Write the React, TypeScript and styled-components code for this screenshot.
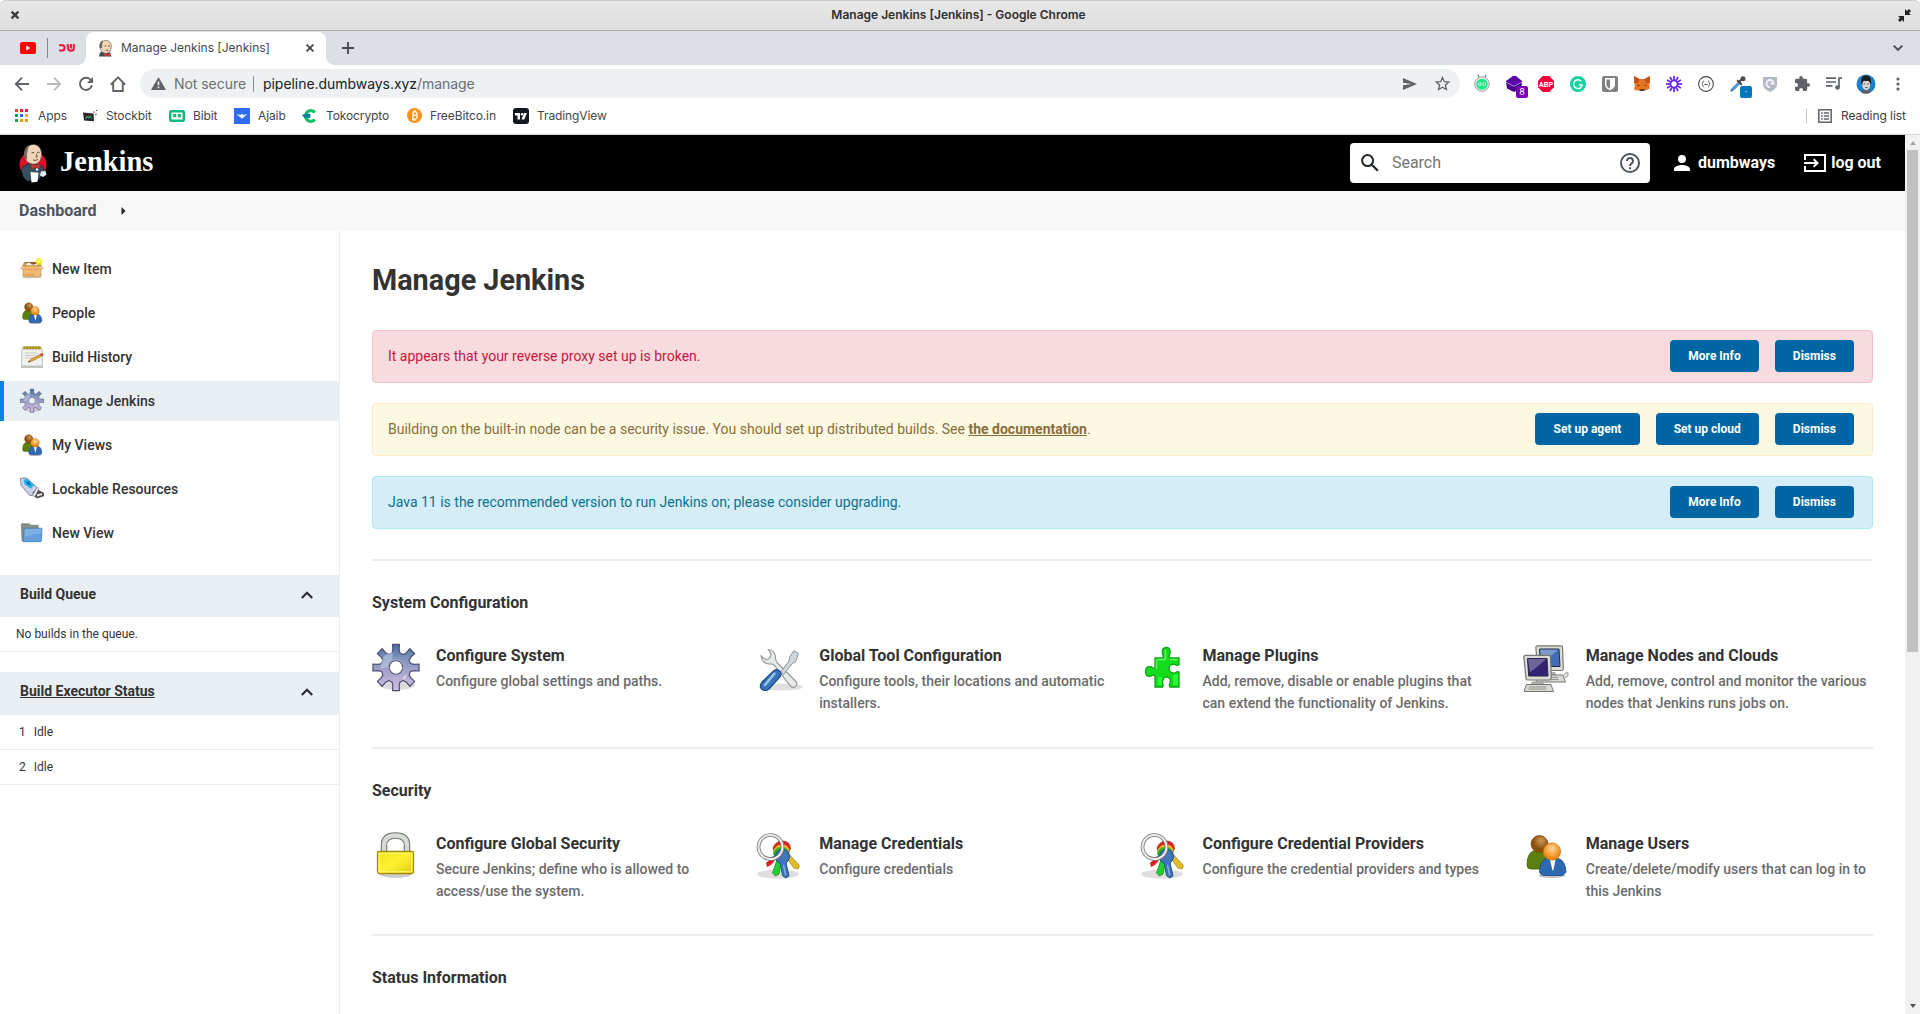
import React from 'react';
import styled, { createGlobalStyle } from 'styled-components';

const GlobalStyle = createGlobalStyle`
  *, *::before, *::after { box-sizing: border-box; }
  body { margin: 0; background: #fff; overflow: hidden; }
  svg { display: block; flex: none; overflow: visible; }
`;

const uiFont = 'Inter, "Open Sans", sans-serif';
const pageFont = 'Roboto, "Noto Sans", sans-serif';

/* ---------- window and browser chrome ---------- */

const Window = styled.div`
  display: flex;
  flex-direction: column;
  width: 1920px;
  height: 1014px;
  overflow: hidden;
  background: #fff;
  font-family: ${pageFont};
`;

const TitleBar = styled.header`
  display: flex;
  align-items: center;
  justify-content: space-between;
  flex: none;
  height: 31px;
  padding: 0 9px 0 11px;
  border-bottom: 1px solid #ababab;
  border-radius: 6px 6px 0 0;
  background: linear-gradient(#e8e8e8, #dedede);
  box-shadow: inset 0 1px #c9c9c9;
`;

const WindowTitle = styled.span`
  font: 600 12px/16px ${uiFont};
  color: #303030;
`;

const TabStrip = styled.div`
  display: flex;
  align-items: center;
  flex: none;
  height: 34px;
  padding: 0 17px 0 20px;
  background: #dcdfe4;
`;

const PinDivider = styled.i`
  width: 1px;
  height: 20px;
  margin: 0 11px;
  background: #85888c;
`;

const Tab = styled.div`
  display: flex;
  align-items: center;
  position: relative;
  width: 240px;
  height: 33px;
  margin: 1px 0 0 11px;
  padding: 0 12px 1px 12px;
  border-radius: 8px 8px 0 0;
  background: #fff;

  &::before, &::after {
    content: '';
    position: absolute;
    bottom: 0;
    width: 8px;
    height: 8px;
  }
  &::before {
    left: -8px;
    background: radial-gradient(circle at 0 0, transparent 7.5px, #fff 8px);
  }
  &::after {
    right: -8px;
    background: radial-gradient(circle at 100% 0, transparent 7.5px, #fff 8px);
  }
`;

const TabTitle = styled.span`
  flex: 1;
  margin-left: 8px;
  font: 400 12px/16px ${uiFont};
  color: #45494d;
`;

const NewTab = styled.div`
  flex: 1;
  margin-left: 16px;
`;

const Toolbar = styled.div`
  display: flex;
  align-items: center;
  flex: none;
  height: 37px;
  padding: 0 6px;
`;

const ToolCell = styled.span`
  display: flex;
  align-items: center;
  justify-content: center;
  position: relative;
  width: 32px;
  height: 28px;
`;

const Badge = styled.b<{ $color: string }>`
  position: absolute;
  left: 18px;
  top: 16px;
  width: 12px;
  height: 12px;
  border-radius: 2px;
  background: ${(p) => p.$color};
  color: #fff;
  font: 400 9px/12px ${uiFont};
  text-align: center;
`;

const Omnibox = styled.div`
  display: flex;
  align-items: center;
  flex: 1;
  height: 29px;
  margin: 0 6px;
  padding: 0 10px 0 11px;
  border-radius: 15px;
  background: #eef1f2;
  font: 400 14px/20px ${uiFont};
  letter-spacing: -0.05px;
  color: #6b6f73;
`;

const Security = styled.span`
  margin-left: 8px;
  padding-right: 7px;
`;

const UrlDivider = styled.i`
  width: 1px;
  height: 16px;
  background: #8d9195;
`;

const Url = styled.span`
  flex: 1;
  margin-left: 9px;
  b { font-weight: 400; color: #202124; }
`;

const OmniActions = styled.span`
  display: flex;
  align-items: center;
  gap: 18px;
`;

const BookmarkBar = styled.div`
  display: flex;
  align-items: center;
  flex: none;
  height: 33px;
  padding: 0 14px 5px 15px;
  border-bottom: 1px solid #d3d5d8;
`;

const Bookmark = styled.span<{ $width: number; $gap?: number }>`
  display: flex;
  align-items: center;
  gap: ${(p) => p.$gap ?? 8}px;
  width: ${(p) => p.$width}px;
  font: 400 12px/20px ${uiFont};
  letter-spacing: -0.1px;
  white-space: nowrap;
  color: #42464a;
`;

const ReadingList = styled.span`
  display: flex;
  align-items: center;
  gap: 9px;
  margin-left: auto;
  padding-left: 11px;
  border-left: 1px solid #c4c7ca;
  font: 400 12px/16px ${uiFont};
  letter-spacing: -0.05px;
  color: #3c4043;
`;

/* ---------- page ---------- */

const Viewport = styled.div`
  display: flex;
  flex: 1;
  min-height: 0;
`;

const Page = styled.div`
  flex: 1;
  display: flex;
  flex-direction: column;
  min-width: 0;
`;

const Scrollbar = styled.div`
  display: flex;
  flex-direction: column;
  align-items: center;
  width: 15px;
  background: #f1f1f1;
`;

const ScrollArrow = styled.i<{ $down?: boolean }>`
  width: 0;
  height: 0;
  margin: ${(p) => (p.$down ? 'auto 0 6px' : '6px 0 5px')};
  border: 3.5px solid transparent;
  border-top: ${(p) => (p.$down ? '4px solid #505050' : '0')};
  border-bottom: ${(p) => (p.$down ? '0' : '4px solid #a3a3a3')};
`;

const ScrollThumb = styled.div`
  width: 11px;
  height: 502px;
  background: #c1c1c1;
`;

const PageHeader = styled.header`
  display: flex;
  align-items: center;
  flex: none;
  height: 56px;
  padding: 0 24px 0 19px;
  background: #000;
  color: #fff;
`;

const Wordmark = styled.span`
  flex: 1;
  margin: 0 0 2px 12px;
  font: 700 28.5px/34px "Liberation Serif", serif;
`;

const SearchBox = styled.div`
  display: flex;
  align-items: center;
  width: 300px;
  height: 40px;
  padding: 0 10px 0 11px;
  border-radius: 4px;
  background: #fff;
  font-size: 16px;
  color: #757575;
`;

const SearchText = styled.span`
  flex: 1;
  margin: 0 0 1px 13px;
`;

const UserLink = styled.a<{ $left: number; $gap: number }>`
  display: flex;
  align-items: center;
  gap: ${(p) => p.$gap}px;
  margin-left: ${(p) => p.$left}px;
  font-size: 16px;
  font-weight: 700;
  line-height: 20px;
  color: #fff;
`;

const Breadcrumbs = styled.nav`
  display: flex;
  align-items: center;
  gap: 25px;
  flex: none;
  height: 40px;
  padding: 0 0 1px 19px;
  background: #f8f8f8;
  font-size: 16px;
  font-weight: 700;
  color: #4d545d;
`;

const Columns = styled.div`
  display: flex;
  flex: 1;
  min-height: 0;
`;

const Sidebar = styled.aside`
  flex: none;
  width: 340px;
  padding-top: 18px;
  border-right: 1px solid #e9eef2;
  color: #333;
`;

const TaskList = styled.nav`
  display: flex;
  flex-direction: column;
  gap: 4px;
  margin-bottom: 22px;
`;

const Task = styled.a<{ $active?: boolean }>`
  display: flex;
  align-items: center;
  gap: 8px;
  height: 40px;
  padding-left: 16px;
  border-left: 4px solid ${(p) => (p.$active ? '#0b83d9' : 'transparent')};
  background: ${(p) => (p.$active ? '#e9eef2' : 'transparent')};
  background-clip: padding-box;
  font-size: 14px;
  font-weight: 500;
`;

const PaneHeader = styled.div<{ $link?: boolean; $height: number }>`
  display: flex;
  justify-content: space-between;
  height: ${(p) => p.$height}px;
  padding: 10px 26px 0 20px;
  background: #e9eef2;
  font: 700 14px/18px ${pageFont};
  text-decoration: ${(p) => (p.$link ? 'underline' : 'none')};
  svg { margin-top: 6px; }
`;

const PaneRow = styled.div<{ $left: number }>`
  display: flex;
  gap: 8px;
  height: 35px;
  padding-left: ${(p) => p.$left}px;
  border-bottom: 1px solid #e9eef2;
  font-size: 12px;
  line-height: 34px;
`;

const Pane = styled.section`
  margin-bottom: 20px;
`;

const Main = styled.main`
  flex: 1;
  padding: 0 32px;
  overflow: hidden;
  color: #333;
`;

const Heading = styled.h1`
  margin: 30px 0 31px;
  font: 700 28.8px/38px ${pageFont};
`;

const tones = {
  danger: ['#f8dbdf', '#f5c1ca', '#c4183c'],
  warning: ['#fcf9e2', '#fbebc8', '#8a6d3b'],
  info: ['#d4edf6', '#abecee', '#0b7291'],
};

const AlertList = styled.div`
  display: flex;
  flex-direction: column;
  gap: 20px;
  margin-bottom: 30px;
`;

const Alert = styled.div<{ $tone: keyof typeof tones }>`
  display: flex;
  align-items: center;
  gap: 16px;
  height: 53px;
  padding: 0 18px 1px 15px;
  border: 1px solid ${(p) => tones[p.$tone][1]};
  border-radius: 4px;
  background: ${(p) => tones[p.$tone][0]};
  color: ${(p) => tones[p.$tone][2]};
  font-size: 14px;
`;

const AlertText = styled.span`
  flex: 1;
  a { font-weight: 700; text-decoration: underline; }
`;

const Button = styled.button`
  height: 32px;
  padding: 0 18.1px;
  border: 0;
  border-radius: 4px;
  background: #0066a3;
  color: #fff;
  font: 700 12px/16px ${pageFont};
`;

const Section = styled.section<{ $height: number }>`
  height: ${(p) => p.$height}px;
  border-top: 2px solid #e9eef2;
`;

const SectionTitle = styled.h2`
  margin: 32px 0 31px;
  font: 700 16px/20px ${pageFont};
`;

const Grid = styled.div`
  display: grid;
  grid-template-columns: repeat(4, 1fr);
  gap: 32px;
`;

const Item = styled.div`
  display: flex;
  gap: 16px;
`;

const ItemTitle = styled.dt`
  font: 700 16px/22px ${pageFont};
`;

const ItemBody = styled.dl`
  flex: 1;
  margin: 1px 0 0;
`;

const ItemText = styled.dd`
  margin: 3px 0 0;
  font: 500 14px/22px ${pageFont};
  color: #6b6b6b;
`;

/* ---------- browser icons ---------- */

const stroke = (color = '#5f6368', width = 2) => ({
  fill: 'none',
  stroke: color,
  strokeWidth: width,
});

const CloseIcon = ({ size = 8, width = 1.7 }: { size?: number; width?: number }) => (
  <svg width={size} height={size} viewBox="0 0 8 8"><path d="M.6.6l6.8 6.8M7.4.6L.6 7.4" {...stroke('#3c4043', width)} /></svg>
);
const RestoreIcon = () => (
  <svg width="13" height="13" viewBox="0 0 13 13" fill="#222"><path d="M7 6V0l2 2 2-2 2 2-2 2 2 2zM6 7v6l-2-2-2 2-2-2 2-2-2-2z" /></svg>
);
const YoutubeIcon = () => (
  <svg width="16" height="12" viewBox="0 0 16 12"><rect width="16" height="12" rx="2.6" fill="#f00" /><path d="M6.2 3.6L10.4 6l-4.2 2.4z" fill="#fff" /></svg>
);
const DumbwaysIcon = () => (
  <svg width="16" height="10" viewBox="0 0 16 10">
    <path d="M0 2.2h3.600q1.900 0 1.900 2.600T3.600 7.600H0" {...stroke('#f5113f', 2)} />
    <path d="M8.600 1l.4 4.400q.3 2.300 3.200 2.300t2.600-2.700V1M11.900 1v4.500" {...stroke('#f5113f', 2)} />
  </svg>
);
const ButlerHead = () => (
  <svg width="15" height="17" viewBox="0 0 15 17">
    <path d="M1 16.500l1-4 4-1 6 1 1.500 4z" fill="#335061" />
    <path d="M3 11C1 7 2 2 6 .8s7 1 7.300 5c.2 3-.8 6-3.300 7.200-2 .8-5 .4-7-2z" fill="#f0d6b7" stroke="#5d504a" strokeWidth=".6" />
    <path d="M1.800 8C.8 4.500 2.200 1.200 5 .6L4.300 3.500 3.800 8z" fill="#6b6358" />
    <path d="M6.500 6h2M10 6h2M7.500 10l3 .3" stroke="#50443c" strokeWidth=".8" />
    <path d="M6 13l3.300 1.300L12.500 13v3.500L9.300 15.200 6.300 16.500z" fill="#d33833" />
  </svg>
);
const PlusIcon = () => (
  <svg width="12" height="12" viewBox="0 0 12 12"><path d="M6 0v12M0 6h12" {...stroke('#45494d', 1.8)} /></svg>
);
const ChevronDown = () => (
  <svg width="10" height="6" viewBox="0 0 10 6"><path d="M.7.7L5 5 9.300.7" {...stroke('#45494d', 1.8)} /></svg>
);
const ArrowIcon = ({ right }: { right?: boolean }) => (
  <svg width="14" height="14" viewBox="0 0 14 14">
    <path d={right ? 'M0 7h13M7 .7L13.200 7 7 13.300' : 'M14 7H1M7 .7L.8 7 7 13.300'} {...stroke(right ? '#b9bcbf' : '#5f6368', 1.8)} />
  </svg>
);
const ReloadIcon = () => (
  <svg width="14" height="14" viewBox="0 0 14 14"><path d="M12 3.200A6.100 6.100 0 1 0 13 8.300" {...stroke('#5f6368', 1.9)} /><path d="M14 0v6H8z" fill="#5f6368" /></svg>
);
const HomeIcon = () => (
  <svg width="16" height="16" viewBox="0 0 16 16"><path d="M.8 8.600L8 1.300l7.200 7.300M3.200 7v8h9.600V7" {...stroke('#5f6368', 1.9)} /></svg>
);
const WarningIcon = () => (
  <svg width="15" height="13" viewBox="0 0 15 13"><path d="M7.500 0L15 13H0z" fill="#5f6368" /><path d="M7.500 4.500v3.700M7.500 9.500v1.700" stroke="#eef1f2" strokeWidth="1.600" /></svg>
);
const SendIcon = () => (
  <svg width="14" height="12" viewBox="0 0 14 12"><path d="M0 0l14 6L0 12V7.300L8.500 6 0 4.700z" fill="#5f6368" /></svg>
);
const StarIcon = () => (
  <svg width="15" height="15" viewBox="0 0 15 15"><path d="M7.500 1.500l1.800 4.200 4.500.4-3.400 3 1 4.400-3.900-2.300-3.900 2.300 1-4.400-3.400-3 4.500-.4z" {...stroke('#5f6368', 1.3)} /></svg>
);
const AndroidIcon = () => (
  <svg width="16" height="17" viewBox="0 0 16 17">
    <path d="M4 0l1.500 3.500M12 0l-1.500 3.500" {...stroke('#6c7480', 1.2)} />
    <circle cx="8" cy="9" r="7.300" fill="#e9ecef" stroke="#9aa0a8" />
    <path d="M2.300 9c.2-3 2.500-5 5.700-5s5.500 2 5.700 5c.1 3.400-2.500 5.600-5.700 5.600S2.200 12.400 2.300 9z" fill="#1de783" />
    <path d="M4.200 9.200a1.500 1.500 0 1 1 3 0 1.500 1.500 0 1 1-3 0M8.800 9.200a1.500 1.500 0 1 1 3 0 1.500 1.500 0 1 1-3 0" {...stroke('#d6fbe8', 1)} />
  </svg>
);
const CubesIcon = () => (
  <svg width="18" height="16" viewBox="0 0 18 16"><path d="M8 0h3l6 5v1L9 10 1 6V5z" fill="#5c00a8" /><path d="M1 6.500L9 10.500v5.500L2 12.500z" fill="#4c0094" /><path d="M17 6.500L9 10.500V16l7-4z" fill="#3d0080" /></svg>
);
const AbpIcon = () => (
  <svg width="16" height="16" viewBox="0 0 16 16">
    <path d="M4.700 0h6.600L16 4.700v6.600L11.300 16H4.700L0 11.300V4.700z" fill="#f5003c" />
    <text x="8" y="10.700" textAnchor="middle" fill="#fff" fontFamily="Roboto" fontWeight="700" fontSize="7.400">ABP</text>
  </svg>
);
const GrammarlyIcon = () => (
  <svg width="16" height="16" viewBox="0 0 16 16"><circle cx="8" cy="8" r="8" fill="#12d39d" /><path d="M11.300 5.200A4.400 4.400 0 1 0 12.300 9H9" {...stroke('#fff', 1.4)} /></svg>
);
const BitwardenIcon = () => (
  <svg width="16" height="16" viewBox="0 0 16 16"><rect width="16" height="16" rx="2" fill="#808080" /><path d="M3 2h10v6.500c0 3-2.500 4.500-5 5.700-2.500-1.200-5-2.700-5-5.700z" fill="#fff" /><path d="M4.500 3.500H8v9.200c-2-1-3.500-2.300-3.500-4.200z" fill="#808080" /></svg>
);
const MetamaskIcon = () => (
  <svg width="16" height="15" viewBox="0 0 16 15">
    <path d="M0 0l5.500 3h5L16 0v6l-.8 3 .6 3.500-4 1.700L10 15H6l-1.800-.8-4 .1L.8 9 0 6z" fill="#e8751f" />
    <path d="M0 0l5.500 3L4 7 .5 7zM16 0l-5.500 3L12 7l3.500 0z" fill="#c4501f" />
    <path d="M6 13h4l.5 1.500L9.500 15h-3l-1-.5z" fill="#5a3a28" /><path d="M3.800 8.500l2.200 1.200-2 .4zM12.200 8.500L10 9.700l2 .4z" fill="#233447" />
  </svg>
);
const BurstIcon = () => (
  <svg width="16" height="16" viewBox="-8 -8 16 16">
    {Array.from({ length: 12 }, (_, i) => <path key={i} d="M0-3V-8" transform={`rotate(${i * 30})`} {...stroke('#6d28e8', 1.8)} />)}
    <circle r="3.500" {...stroke('#6d28e8', 1.6)} />
  </svg>
);
const BracesIcon = () => (
  <svg width="16" height="16" viewBox="0 0 16 16">
    <circle cx="8" cy="8" r="7.400" {...stroke('#4a4a4a', 1.1)} />
    <path d="M5.800 5q-1 0-1 1.200T3.800 8q1 .3 1 1.500t1 1.400M10.200 5q1 0 1 1.200t1 1.800q-1 .3-1 1.500t-1 1.400M6.400 8.500h3.300" {...stroke('#5a5a5a', 1)} />
  </svg>
);
const DropperIcon = () => (
  <svg width="16" height="16" viewBox="0 0 16 16">
    <path d="M9 5.500L1.500 13l-.7 2.300 2.300-.7L10.500 7z" fill="#4aa0e8" stroke="#37618c" strokeWidth=".8" />
    <path d="M7.200 4.200l4.600 4.600M9.500 5.500L13 2" stroke="#444" strokeWidth="2" /><circle cx="13" cy="2.800" r="2.500" fill="#4b4b4b" />
  </svg>
);
const ShieldIcon = () => (
  <svg width="14" height="16" viewBox="0 0 14 16"><path d="M0 1h14v7c0 4-3.500 6.200-7 8-3.500-1.800-7-4-7-8z" fill="#b3b7c6" /><path d="M7 11.200A3.600 3.600 0 1 1 10.600 7.500H7.500" {...stroke('#f4f5f8', 1.9)} /></svg>
);
const PuzzleIcon = () => (
  <svg width="15" height="15" viewBox="2 1 21 21"><path fill="#5f6368" d="M20.500 11H19V7c0-1.100-.9-2-2-2h-4V3.500a2.500 2.500 0 0 0-5 0V5H4c-1.100 0-2 .9-2 2v3.800h1.500a2.700 2.700 0 0 1 0 5.400H2V20c0 1.100.9 2 2 2h3.800v-1.500a2.700 2.700 0 0 1 5.400 0V22H17c1.100 0 2-.9 2-2v-4h1.500a2.500 2.500 0 0 0 0-5z" /></svg>
);
const QueueIcon = () => (
  <svg width="16" height="13" viewBox="0 0 16 13"><path d="M0 1.200h10M0 5h10M0 8.800h6.500M13 10V1.200h3" {...stroke('#5f6368', 1.7)} /><circle cx="11.500" cy="10.500" r="2.300" fill="#5f6368" /></svg>
);
const Avatar = () => (
  <svg width="20" height="20" viewBox="0 0 20 20">
    <circle cx="10" cy="10" r="9.500" fill="#1583cb" />
    <path d="M5 18.200c1-2 2.500-2.700 5-2.700s4 .7 5 2.700a9.500 9.500 0 0 1-10 0z" fill="#5a6065" />
    <path d="M5.500 10C4.500 4 6.500 1.500 10 1.500s6 2.500 4.700 8.500L10 14z" fill="#1c1c1e" />
    <ellipse cx="10.200" cy="10.800" rx="4" ry="5.400" fill="#d8d8d5" />
    <path d="M5.800 9C5.500 5 7 3 10 3s5 2 4.300 6l-2-2.200-2.800.5-1.700-.7z" fill="#1c1c1e" />
    <path d="M7.500 10h1.700M11.300 10H13M9.200 13.600h2.400" stroke="#4c4c4c" strokeWidth=".9" />
  </svg>
);
const KebabIcon = () => (
  <svg width="4" height="14" viewBox="0 0 4 14" fill="#5f6368"><circle cx="2" cy="2" r="1.600" /><circle cx="2" cy="7" r="1.600" /><circle cx="2" cy="12" r="1.600" /></svg>
);
const AppsIcon = () => (
  <svg width="13" height="13" viewBox="0 0 13 13">
    {['#e94235', '#e91e3c', '#e91e3c', '#0f9d58', '#1a73e8', '#f9ab00', '#0f9d58', '#f29900', '#f29900'].map((c, i) => (
      <rect key={i} x={(i % 3) * 5} y={Math.floor(i / 3) * 5} width="3" height="3" fill={c} />
    ))}
  </svg>
);
const StockbitIcon = () => (
  <svg width="15" height="12" viewBox="0 0 15 12"><path d="M0 2.500l10.500 1 .5 7.700-10-.6z" fill="#26272b" /><path d="M2.500 8.500l2-1.800L6 7.800l2-2" {...stroke('#32c060', 1.1)} /><path d="M3 6l1 .5M5.500 5.500h1" stroke="#e23" strokeWidth="1" /><path d="M8 8h1.500" stroke="#47f" /><path d="M10.500 2.500l.8-.8M12.300 4.500l1.300-.3M13.200.8l.8-.6" stroke="#333" strokeWidth="1.200" /></svg>
);
const BibitIcon = () => (
  <svg width="16" height="12" viewBox="0 0 16 12"><rect x="1.200" y="1.200" width="13.600" height="9.600" rx="1" {...stroke('#0eb97a', 2.4)} /><path d="M4.200 4h3v3.300h-3zM8.800 4h3v3.300h-3z" fill="#0eb97a" /></svg>
);
const AjaibIcon = () => (
  <svg width="16" height="16" viewBox="0 0 16 16"><rect width="16" height="16" fill="#2f6bf3" /><path d="M2.500 6l4 .9L8 5.500l1.500 1.400 4-.9-3.400 3L8 10.700 5.900 9z" fill="#e8efff" /></svg>
);
const TokoIcon = () => (
  <svg width="15" height="14" viewBox="0 0 15 14"><path d="M12.800 3.500A5.300 5.300 0 1 0 12.800 10.500" {...stroke('#14be62', 3.2)} /><path d="M0 7l4.500-2.500 4 .5V7l-.5 2H5.500z" fill="#127fa3" /><path d="M0 5.500h3.500L3 9.500z" fill="#127fa3" /></svg>
);
const BitcoinIcon = () => (
  <svg width="15" height="15" viewBox="0 0 15 15">
    <circle cx="7.500" cy="7.500" r="7.500" fill="#f7931a" />
    <path d="M5.800 3.800h2.500q1.800.1 1.800 1.700T8.300 7.300H6M8.300 7.300q2 .2 1.800 2t-2 1.900H5M6.300 3.800L5.600 11.200M7 2.300v1.500M8.600 2.300v1.500M6.300 11.200v1.500M8 11.200v1.500" {...stroke('#fff', 1.2)} />
  </svg>
);
const TradingViewIcon = () => (
  <svg width="16" height="16" viewBox="0 0 16 16"><rect width="16" height="16" rx="3" fill="#131722" /><path d="M2 5h5v6.500H4.500V7.500H2zM11 5h3l-2.700 6.500H8.500z" fill="#fff" /><circle cx="9" cy="6.200" r="1.200" fill="#fff" /></svg>
);
const ListIcon = () => (
  <svg width="14" height="14" viewBox="0 0 14 14"><rect x=".8" y=".8" width="12.400" height="12.400" {...stroke('#5f6368', 1.5)} /><path d="M3 4h1.600M3 7h1.600M3 10h1.600M5.800 4H11M5.800 7H11M5.800 10H11" {...stroke('#5f6368', 1.5)} /></svg>
);

/* ---------- page icons ---------- */

const JenkinsLogo = () => (
  <svg width="29" height="39" viewBox="0 0 29 39">
    <ellipse cx="14" cy="20.500" rx="13.500" ry="13" fill="#e0102c" />
    <path d="M4 22.500l6-3 8 1 6 2 1.500 6-2.500 2-2 4-4 2.500H8l-4-4.500-1.500-6z" fill="#335061" stroke="#14232c" strokeWidth=".7" />
    <path d="M7.500 17C4 11 5.500 3 11.500 1S22 3 22.500 9.500c.3 5-2 9.500-6 10.500-3.500.6-6.500-.5-9-3z" fill="#f0d6b7" stroke="#5d504a" strokeWidth=".6" />
    <path d="M6.700 15C3.500 9 5.500 2.500 10.500 1.200 8.500 4 9.300 6 8.300 8.500 7.500 10.500 8.600 13 8 15.500z" fill="#756b60" />
    <path d="M12.500 9q1.500-1 2.800 0M18 8.600q1.500-.8 2.600 0M17.500 10l.6 3-1.500.2M14 16q2.500 1 5-.5" fill="none" stroke="#4b3d35" strokeWidth=".9" />
    <path d="M12 20l4.500 1.500 4-2 .6 5-4.400-1.200-4.400 2z" fill="#d33833" stroke="#8f1820" strokeWidth=".5" />
    <path d="M11.500 28l8 .8-1 9-6 .7z" fill="#fff" />
    <path d="M22 27.500l4.500-.8 1 4-3.500 2.300-3-1.500z" fill="#e6edf1" />
    <circle cx="18" cy="25.500" r="1.200" fill="#fff" />
  </svg>
);
const SearchIcon = () => (
  <svg width="18" height="18" viewBox="0 0 18 18"><circle cx="6.600" cy="6.600" r="5.500" {...stroke('#22272b')} /><path d="M10.800 10.800l6 6" {...stroke('#22272b', 2.3)} /></svg>
);
const HelpIcon = () => (
  <svg width="20" height="20" viewBox="0 0 20 20"><circle cx="10" cy="10" r="9" {...stroke('#4d545d')} /><path d="M7 8a3 3 0 1 1 4.700 2.400Q10 11.500 10 13" {...stroke('#4d545d')} /><path d="M9 14.300h2v2H9z" fill="#4d545d" /></svg>
);
const PersonIcon = () => (
  <svg width="16" height="16" viewBox="4 4 16 16" fill="#fff"><path d="M12 12a4 4 0 1 0 0-8 4 4 0 0 0 0 8zm0 2c-2.670 0-8 1.340-8 4v2h16v-2c0-2.660-5.330-4-8-4z" /></svg>
);
const LogoutIcon = () => (
  <svg width="22" height="18" viewBox="0 0 22 18"><path d="M1 6V1h20v16H1v-5M0 9h13M9.700 5.200L13.500 9l-3.800 3.800" {...stroke('#fff')} /></svg>
);
const CrumbArrow = () => (
  <svg width="5" height="8" viewBox="0 0 5 8"><path d="M.5 0l4 4-4 4z" fill="#222" /></svg>
);
const ChevronUp = () => (
  <svg width="12" height="8" viewBox="0 0 12 8"><path d="M.8 7L6 1.800 11.200 7" {...stroke('#2b2f33', 2.2)} /></svg>
);

type IconProps = { size?: number };

const gearPath = (() => {
  const pts: string[] = [];
  for (let i = 0; i < 8; i++) {
    const a = (i * Math.PI) / 4;
    ([[-0.27, 15], [-0.17, 18.500], [-0.15, 23.300], [0.15, 23.300], [0.17, 18.500], [0.27, 15]] as const).forEach(([d, r]) => {
      pts.push(`${(24 + r * Math.sin(a + d)).toFixed(2)} ${(23.5 - r * Math.cos(a + d)).toFixed(2)}`);
    });
  }
  return `M${pts.join('L')}ZM24 16.700a6.800 6.800 0 1 0 .01 0Z`;
})();

const GearIcon = ({ size = 48 }: IconProps) => (
  <svg width={size} height={size} viewBox="0 0 48 48">
    <defs>
      <linearGradient id="gear" x1="0" y1="0" x2="0" y2="1"><stop offset="0" stopColor="#486a9e" /><stop offset=".3" stopColor="#7f93bd" /><stop offset=".6" stopColor="#a7a3cc" /><stop offset="1" stopColor="#d3bfe2" /></linearGradient>
    </defs>
    <ellipse cx="25" cy="41" rx="18" ry="5" fill="#000" opacity=".14" />
    <path d={gearPath} fill="url(#gear)" fillRule="evenodd" stroke="#4b4f74" strokeWidth="1.200" strokeLinejoin="round" />
    <path d="M9 20q1-8 8-11l4-1-1 8q-4 2-4 7L9 25z" fill="#c3d0e6" opacity=".55" />
    <circle cx="24" cy="23.500" r="7.900" fill="none" stroke="#a9abc9" strokeWidth="1.300" />
    <path d="M30 34l5-4-2 6z" fill="#fff" opacity=".45" />
  </svg>
);

const ToolsIcon = () => (
  <svg width="48" height="48" viewBox="0 0 48 48">
    <ellipse cx="26" cy="43" rx="22" ry="3.500" fill="#000" opacity=".12" />
    <path d="M13.500 5.500q6 .5 7 7.500-.3 3 1.500 5.500l19 19q2 3-.5 5t-5-.5l-16-20.500q-2-2-5-1.500-7-.5-8.500-8l4.500 3.500q3 .5 4.500-2t.5-4.500z" fill="#e9eaea" stroke="#999b9b" strokeWidth="1.200" />
    <path d="M39 6.500l4.500 3-3 8.500-3 1.500-9 11-3-2.500 8.500-11 .5-4z" fill="#cfd6da" stroke="#8996a0" />
    <path d="M19 26.500q3-2 6 1 2 2.500 0 5.500L14 45q-4 3-7.500 0-2.500-3 .5-7z" fill="#3872b8" stroke="#1d4a85" strokeWidth="1.200" />
    <path d="M19.500 29.500L10 41" stroke="#9cc3ef" strokeWidth="2.500" strokeLinecap="round" />
  </svg>
);

const PluginIcon = () => (
  <svg width="48" height="48" viewBox="0 0 48 48">
    <path d="M16 14h8q1-2-.5-4Q22 4 27 3.500T31 10q-1.500 2-.5 4H40v7q-2 1-4-.5-6-1-6 4t6 4.500q2-2 4-1V43h-9q-1.500-2 0-4 1.500-5.500-3-6t-4.500 6q1.500 2 0 4h-7.500V32q-2-2-4 0-5.500 1.500-5.500-4.500t6-4.500q2 2 3.500.5z" fill="#12dc1c" stroke="#0aa810" strokeWidth="1.300" />
    <path d="M17.500 15.500h9V6M17.500 16v9M31 15.500h7.500" fill="none" stroke="#63f56a" strokeWidth="1.400" />
    <path d="M19 33h4v8h-4zM34 31l5-1v11h-5z" fill="#35ff3c" opacity=".8" />
  </svg>
);

const Computer = ({ screen }: { screen: string }) => (
  <g>
    <path d="M9 27h11l2 4H7z" fill="#a9aaa5" />
    <path d="M2.500.8h23.500q1.500 0 1.500 1.500l.8 21q0 2-1.800 2.200H4.500Q3 25.500 3 24L.8 2.500Q.8 1 2.500.8z" fill="#dcdcd7" stroke="#777872" strokeWidth="1.200" />
    <path d="M4.500 4H24l1 17.500H5.700z" fill={screen} stroke="#23264d" />
    <path d="M5 4.500h18.500L7 18z" fill="#fff" opacity=".3" />
    <path d="M3.500 30h24.500l2.500 7H1z" fill="#d8d8d2" stroke="#777872" /><path d="M6 32.500h17M5.500 34.500h18" stroke="#94958e" />
  </g>
);
const NodesIcon = () => (
  <svg width="48" height="48" viewBox="0 0 48 48">
    <g transform="translate(13 1)"><Computer screen="#3e6fb5" /></g>
    <path d="M42 31q4-4 4-1t-5 4" fill="none" stroke="#b0b0ab" strokeWidth="1.500" />
    <g transform="translate(1 10.500)"><Computer screen="#31236f" /></g>
  </svg>
);

const LockIcon = () => (
  <svg width="48" height="48" viewBox="0 0 48 48">
    <defs><linearGradient id="lock" x1="0" y1="0" x2="1" y2="1"><stop offset="0" stopColor="#f0e21d" /><stop offset=".5" stopColor="#fff130" /><stop offset="1" stopColor="#ddc90a" /></linearGradient></defs>
    <ellipse cx="23.500" cy="42" rx="16" ry="4" fill="#000" opacity=".2" />
    <path d="M12 21V13.500Q12 3.500 23.500 3.500T35 13.500V21" fill="none" stroke="#737570" strokeWidth="6.500" />
    <path d="M12 21V13.500Q12 3.500 23.500 3.500T35 13.500V21" fill="none" stroke="#d6dbd5" strokeWidth="4.300" />
    <rect x="5.500" y="19.500" width="36" height="22" rx="1.800" fill="url(#lock)" stroke="#a08a05" strokeWidth="1.300" />
    <rect x="7.200" y="21.200" width="32.600" height="18.600" fill="none" stroke="#fff96d" strokeWidth="1.200" />
  </svg>
);

const KeysIcon = () => (
  <svg width="48" height="48" viewBox="0 0 48 48">
    <ellipse cx="23" cy="42" rx="21" ry="4.500" fill="#000" opacity=".13" />
    <path d="M19 24l-8 7 1 4 4-2 5-6z" fill="#e01e22" />
    <path d="M31 19l13 14q1 3-2 4l-3-1-8-11z" fill="#e0bb27" stroke="#a4861a" strokeWidth=".8" />
    <path d="M18 16q3-7.500 10-7t7.500 7.500L33 22l-12 3z" fill="#e0241f" stroke="#8f1717" strokeWidth=".7" />
    <path d="M18 19q3-7.500 10-6.500T34.500 20L32 26l-11 1z" fill="#ecb61c" />
    <path d="M18 22q2-7.500 9-7t7.500 8l-2.500 5-10 2z" fill="#28b62c" />
    <path d="M22 28l-4.500 13 3 3 3.500-2 2.500-12z" fill="#1ed32a" stroke="#148a1c" strokeWidth=".8" />
    <path d="M20.500 23q1.500-6 7.500-5.500T34.500 25q-.5 4-3.500 6l3 13-3.500 2-3-2.500L25.500 32q-5-3-5-9z" fill="#3f76c0" stroke="#214d8a" strokeWidth="1" />
    <path d="M28.500 33l2 10" stroke="#86aee0" strokeWidth="1.300" />
    <circle cx="15.500" cy="15" r="12" fill="none" stroke="#777" strokeWidth="3.600" />
    <circle cx="15.500" cy="15" r="12" fill="none" stroke="#ededed" strokeWidth="2" />
    <path d="M15 27q7 .5 11-6" fill="none" stroke="#666" strokeWidth="4" /><path d="M15 27q7 .5 11-6" fill="none" stroke="#f2f2f2" strokeWidth="2.300" />
  </svg>
);

const UsersIcon = ({ size = 48 }: IconProps) => (
  <svg width={size} height={size} viewBox="0 0 48 48">
    <defs>
      <radialGradient id="brown" cx=".6" cy=".3"><stop offset="0" stopColor="#d09a54" /><stop offset="1" stopColor="#8b4f0b" /></radialGradient>
      <radialGradient id="orange" cx=".5" cy=".35"><stop offset="0" stopColor="#ffd9a1" /><stop offset="1" stopColor="#f28b16" /></radialGradient>
    </defs>
    <ellipse cx="30" cy="43.500" rx="13" ry="2.500" fill="#000" opacity=".25" />
    <path d="M5 33q0-11 6-14h12q6 2 6 14l-4 4H9q-4 0-4-4z" fill="#5c800f" stroke="#3f5c08" strokeWidth=".8" />
    <path d="M17.500 40q0-11 7-13.500h12q7 2.500 7.500 13.500-2 3.500-5 3.500H22.500q-4 0-5-3.500z" fill="#2f68b2" stroke="#1b4a88" strokeWidth=".8" />
    <path d="M28 28h5.500l-2.200 10.500h-.8z" fill="#fff" />
    <circle cx="17.500" cy="12" r="8.400" fill="url(#brown)" stroke="#794608" strokeWidth=".8" />
    <circle cx="30" cy="19.500" r="8.600" fill="url(#orange)" stroke="#cb7412" strokeWidth=".8" />
  </svg>
);

const BoxIcon = () => (
  <svg width="24" height="24" viewBox="0 0 24 24">
    <ellipse cx="12" cy="20" rx="10" ry="1.300" fill="#000" opacity=".2" />
    <path d="M4 5h16l2 4.500H2z" fill="#d09a5c" /><path d="M6 5h12l1 3.500H5z" fill="#8b5c2c" /><path d="M6 6.700q3-2 5 0t6-.5l1 2.300H5.500z" fill="#f3efe8" />
    <path d="M3 9h18v10q0 .8-1 .8H4q-1 0-1-.8z" fill="#f0b973" stroke="#c58a45" strokeWidth=".6" />
    <path d="M3 9L.5 11.500l3 .8L6 9.200zM21 9l2.500 2.500-3 .8L18 9.200z" fill="#f7cb92" stroke="#c58a45" strokeWidth=".5" />
    <path d="M5 12h14v1H5zM5 17h9v1.700H5z" fill="#e09a4a" opacity=".7" />
    <circle cx="19" cy="4.500" r="3.600" fill="#f8ef15" opacity=".8" /><circle cx="19" cy="4.500" r="1.600" fill="#fff98c" />
  </svg>
);

const HistoryIcon = () => (
  <svg width="24" height="24" viewBox="0 0 24 24">
    <path d="M2 3h20l.7 19.500H1.300z" fill="#f0f0ed" stroke="#b5b6b2" strokeWidth=".8" />
    <path d="M1.500 20.500h21.200v2H1.300z" fill="#c0c1bc" />
    <path d="M3.500 1.300h17.500v3H3.500z" fill="#b9a636" /><path d="M4 1v3.500M7 1v3.500M10 1v3.500M13 1v3.500M16 1v3.500M19 1v3.500" stroke="#867b27" strokeWidth=".7" />
    <path d="M5 8h12M5 10.500h10M5 13h8" stroke="#c9cac6" strokeWidth="1" />
    <path d="M8.500 17l2-2.500L21 9l1 2-10.500 5.300z" fill="#e8a33b" stroke="#8c6420" strokeWidth=".6" />
    <path d="M20 9.200l2-1q1.500 0 1.500 1.700l-2 1.200z" fill="#e0263d" /><path d="M8 17.300l1.200-1.500.9 1z" fill="#222" />
  </svg>
);

const UsbIcon = () => (
  <svg width="24" height="24" viewBox="0 0 24 24">
    <path d="M.5 1.500Q4 .3 7.500 1.500l9.500 9-4.500 8.200q-3 .3-4.500-2L1 8z" fill="#cdd2ea" stroke="#666b94" strokeWidth=".8" />
    <path d="M3.500 3q2.500-1.500 4.500-.5l6 5.500-3 3.700-6.500-4.200z" fill="#21b6e8" /><path d="M6.500 5l4 3M9 4.500l-1 3" stroke="#0a55a3" strokeWidth="1.200" />
    <path d="M13 15.500l3.500-3 7 3.500v3L17 21l-3.500-2.500z" fill="#55534f" stroke="#222" strokeWidth=".6" /><path d="M17 17.500l5-1.200v1.700l-5 1.500z" fill="#f0efed" />
    <path d="M12.500 18.200l4.500-7.500 1.800 1.200-4 7.500z" fill="#f2f2f7" stroke="#777" strokeWidth=".5" />
  </svg>
);

const FolderIcon = () => (
  <svg width="24" height="24" viewBox="0 0 24 24">
    <path d="M1.300 3.500q0-.8.800-.8h7.200l1.200 1.500h7.700V20H2z" fill="#8a8c88" stroke="#6f716d" strokeWidth=".6" />
    <path d="M4.200 7.200h17.800l-.5 12.800q-.1.700-1 .7H3z" fill="#65a0dc" stroke="#4a7cb4" strokeWidth=".7" />
    <path d="M5 8h16.300l-.4 4.500q-8 0-16.300 3.500z" fill="#8ebcea" opacity=".6" />
  </svg>
);

/* ---------- content ---------- */

const bookmarks: [string, React.ReactNode, number, number][] = [
  ['Apps', <AppsIcon />, 68, 10],
  ['Stockbit', <StockbitIcon />, 86, 8],
  ['Bibit', <BibitIcon />, 65, 8],
  ['Ajaib', <AjaibIcon />, 68, 8],
  ['Tokocrypto', <TokoIcon />, 105, 9],
  ['FreeBitco.in', <BitcoinIcon />, 106, 8],
  ['TradingView', <TradingViewIcon />, 100, 8],
];

const extensions: [React.ReactNode, string?, string?][] = [
  [<AndroidIcon />], [<CubesIcon />, '8', '#7a00b8'], [<AbpIcon />], [<GrammarlyIcon />], [<BitwardenIcon />],
  [<MetamaskIcon />], [<BurstIcon />], [<BracesIcon />], [<DropperIcon />, '·', '#0277bd'], [<ShieldIcon />],
  [<PuzzleIcon />], [<QueueIcon />], [<Avatar />], [<KebabIcon />],
];

const tasks: [string, React.ReactNode][] = [
  ['New Item', <BoxIcon />],
  ['People', <UsersIcon size={24} />],
  ['Build History', <HistoryIcon />],
  ['Manage Jenkins', <GearIcon size={24} />],
  ['My Views', <UsersIcon size={24} />],
  ['Lockable Resources', <UsbIcon />],
  ['New View', <FolderIcon />],
];

const alerts: { tone: keyof typeof tones; text: React.ReactNode; actions: string[] }[] = [
  { tone: 'danger', text: 'It appears that your reverse proxy set up is broken.', actions: ['More Info', 'Dismiss'] },
  {
    tone: 'warning',
    text: <>Building on the built-in node can be a security issue. You should set up distributed builds. See <a>the documentation</a>.</>,
    actions: ['Set up agent', 'Set up cloud', 'Dismiss'],
  },
  { tone: 'info', text: 'Java 11 is the recommended version to run Jenkins on; please consider upgrading.', actions: ['More Info', 'Dismiss'] },
];

const sections: { title: string; height: number; items: [string, string, React.ReactNode][] }[] = [
  {
    title: 'System Configuration',
    height: 188,
    items: [
      ['Configure System', 'Configure global settings and paths.', <GearIcon />],
      ['Global Tool Configuration', 'Configure tools, their locations and automatic installers.', <ToolsIcon />],
      ['Manage Plugins', 'Add, remove, disable or enable plugins that can extend the functionality of Jenkins.', <PluginIcon />],
      ['Manage Nodes and Clouds', 'Add, remove, control and monitor the various nodes that Jenkins runs jobs on.', <NodesIcon />],
    ],
  },
  {
    title: 'Security',
    height: 187,
    items: [
      ['Configure Global Security', 'Secure Jenkins; define who is allowed to access/use the system.', <LockIcon />],
      ['Manage Credentials', 'Configure credentials', <KeysIcon />],
      ['Configure Credential Providers', 'Configure the credential providers and types', <KeysIcon />],
      ['Manage Users', 'Create/delete/modify users that can log in to this Jenkins', <UsersIcon />],
    ],
  },
  { title: 'Status Information', height: 120, items: [] },
];

const BrowserChrome = () => (
  <>
    <TitleBar>
      <CloseIcon size={8} width={2.4} />
      <WindowTitle>Manage Jenkins [Jenkins] - Google Chrome</WindowTitle>
      <RestoreIcon />
    </TitleBar>
    <TabStrip>
      <YoutubeIcon />
      <PinDivider />
      <DumbwaysIcon />
      <Tab>
        <ButlerHead />
        <TabTitle>Manage Jenkins [Jenkins]</TabTitle>
        <CloseIcon />
      </Tab>
      <NewTab><PlusIcon /></NewTab>
      <ChevronDown />
    </TabStrip>
    <Toolbar>
      <ToolCell><ArrowIcon /></ToolCell>
      <ToolCell><ArrowIcon right /></ToolCell>
      <ToolCell><ReloadIcon /></ToolCell>
      <ToolCell><HomeIcon /></ToolCell>
      <Omnibox>
        <WarningIcon />
        <Security>Not secure</Security>
        <UrlDivider />
        <Url><b>pipeline.dumbways.xyz</b>/manage</Url>
        <OmniActions><SendIcon /><StarIcon /></OmniActions>
      </Omnibox>
      {extensions.map(([icon, badge, color], i) => (
        <ToolCell key={i}>
          {icon}
          {badge && <Badge $color={color!}>{badge}</Badge>}
        </ToolCell>
      ))}
    </Toolbar>
    <BookmarkBar>
      {bookmarks.map(([name, icon, width, gap]) => (
        <Bookmark key={name} $width={width} $gap={gap}>{icon}{name}</Bookmark>
      ))}
      <ReadingList><ListIcon />Reading list</ReadingList>
    </BookmarkBar>
  </>
);

export default function App() {
  return (
    <Window>
      <GlobalStyle />
      <BrowserChrome />
      <Viewport>
        <Page>
          <PageHeader>
            <JenkinsLogo />
            <Wordmark>Jenkins</Wordmark>
            <SearchBox>
              <SearchIcon />
              <SearchText>Search</SearchText>
              <HelpIcon />
            </SearchBox>
            <UserLink $left={24} $gap={8}><PersonIcon />dumbways</UserLink>
            <UserLink $left={29} $gap={5}><LogoutIcon />log out</UserLink>
          </PageHeader>
          <Breadcrumbs>Dashboard<CrumbArrow /></Breadcrumbs>
          <Columns>
            <Sidebar>
              <TaskList>
                {tasks.map(([name, icon]) => (
                  <Task key={name} $active={name === 'Manage Jenkins'}>{icon}{name}</Task>
                ))}
              </TaskList>
              <Pane>
                <PaneHeader $height={42}>Build Queue<ChevronUp /></PaneHeader>
                <PaneRow $left={16}>No builds in the queue.</PaneRow>
              </Pane>
              <Pane>
                <PaneHeader $height={43} $link>Build Executor Status<ChevronUp /></PaneHeader>
                <PaneRow $left={19}><span>1</span><span>Idle</span></PaneRow>
                <PaneRow $left={19}><span>2</span><span>Idle</span></PaneRow>
              </Pane>
            </Sidebar>
            <Main>
              <Heading>Manage Jenkins</Heading>
              <AlertList>
                {alerts.map(({ tone, text, actions }) => (
                  <Alert key={tone} $tone={tone}>
                    <AlertText>{text}</AlertText>
                    {actions.map((a) => <Button key={a}>{a}</Button>)}
                  </Alert>
                ))}
              </AlertList>
              {sections.map(({ title, height, items }) => (
                <Section key={title} $height={height}>
                  <SectionTitle>{title}</SectionTitle>
                  <Grid>
                    {items.map(([name, text, icon]) => (
                      <Item key={name}>
                        {icon}
                        <ItemBody>
                          <ItemTitle>{name}</ItemTitle>
                          <ItemText>{text}</ItemText>
                        </ItemBody>
                      </Item>
                    ))}
                  </Grid>
                </Section>
              ))}
            </Main>
          </Columns>
        </Page>
        <Scrollbar>
          <ScrollArrow />
          <ScrollThumb />
          <ScrollArrow $down />
        </Scrollbar>
      </Viewport>
    </Window>
  );
}
